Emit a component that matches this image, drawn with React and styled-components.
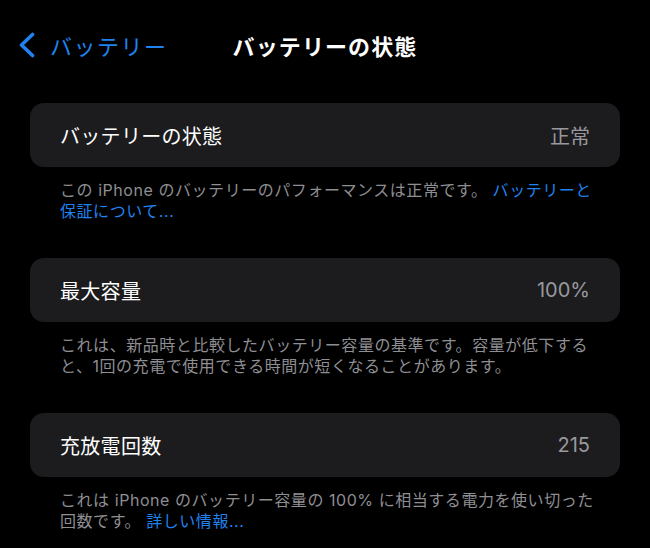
import React from "react";
import styled, { createGlobalStyle } from "styled-components";

const Global = createGlobalStyle`
  html, body {
    margin: 0;
    padding: 0;
    background: #000;
  }
  body {
    font-family: Inter, "Noto Sans CJK JP", "Noto Sans", sans-serif;
    -webkit-font-smoothing: antialiased;
  }
`;

const Page = styled.div`
  width: 650px;
  min-height: 548px;
  background: #000;
  color: #fff;
  overflow: hidden;
`;

const NavBar = styled.header`
  display: grid;
  grid-template-columns: 1fr auto 1fr;
  align-items: center;
  height: 46px;
  padding-top: 22px;
`;

const BackButton = styled.div`
  display: flex;
  align-items: center;
  gap: 14px;
  padding-left: 18px;
  color: #1f82ee;
  font-size: 22px;
  letter-spacing: 1.5px;
`;

const Title = styled.h1`
  margin: 0;
  font-size: 22px;
  font-weight: 700;
  letter-spacing: 1.1px;
  color: #fff;
`;

const Content = styled.main`
  display: flex;
  flex-direction: column;
  gap: 36px;
  padding-top: 35px;
`;

const Section = styled.section`
  display: flex;
  flex-direction: column;
`;

const Card = styled.div`
  display: flex;
  align-items: center;
  justify-content: space-between;
  height: 64px;
  margin: 0 30px;
  padding: 0 30px;
  border-radius: 14px;
  background: #1c1c1e;
`;

const Label = styled.span`
  font-size: 20px;
  font-weight: 400;
  color: #fff;
  letter-spacing: 0.3px;
`;

const Value = styled.span`
  font-size: 20px;
  color: #98989e;
`;

const Footer = styled.p`
  margin: 0;
  padding: 13px 40px 0 60px;
  font-size: 16px;
  line-height: 21px;
  letter-spacing: 0.55px;
  color: #8e8e93;
`;

const Link = styled.span`
  color: #1f82ee;
`;

const Chevron = () => (
  <svg width="18" height="26" viewBox="0 0 18 26" fill="none">
    <polyline
      points="14.5,2.5 3.5,13 14.5,23.5"
      stroke="#1f82ee"
      strokeWidth="3.6"
      strokeLinecap="round"
      strokeLinejoin="round"
    />
  </svg>
);

export default function App() {
  return (
    <Page>
      <Global />
      <NavBar>
        <BackButton>
          <Chevron />
          <span>バッテリー</span>
        </BackButton>
        <Title>バッテリーの状態</Title>
        <div />
      </NavBar>
      <Content>
        <Section>
          <Card>
            <Label>バッテリーの状態</Label>
            <Value>正常</Value>
          </Card>
          <Footer>
            この iPhone のバッテリーのパフォーマンスは正常です。{" "}
            <Link>
              バッテリーと
              <br />
              保証について...
            </Link>
          </Footer>
        </Section>
        <Section>
          <Card>
            <Label>最大容量</Label>
            <Value>100%</Value>
          </Card>
          <Footer>
            これは、新品時と比較したバッテリー容量の基準です。容量が低下する
            <br />
            と、1回の充電で使用できる時間が短くなることがあります。
          </Footer>
        </Section>
        <Section>
          <Card>
            <Label>充放電回数</Label>
            <Value>215</Value>
          </Card>
          <Footer>
            これは iPhone のバッテリー容量の 100% に相当する電力を使い切った
            <br />
            回数です。 <Link>詳しい情報...</Link>
          </Footer>
        </Section>
      </Content>
    </Page>
  );
}
